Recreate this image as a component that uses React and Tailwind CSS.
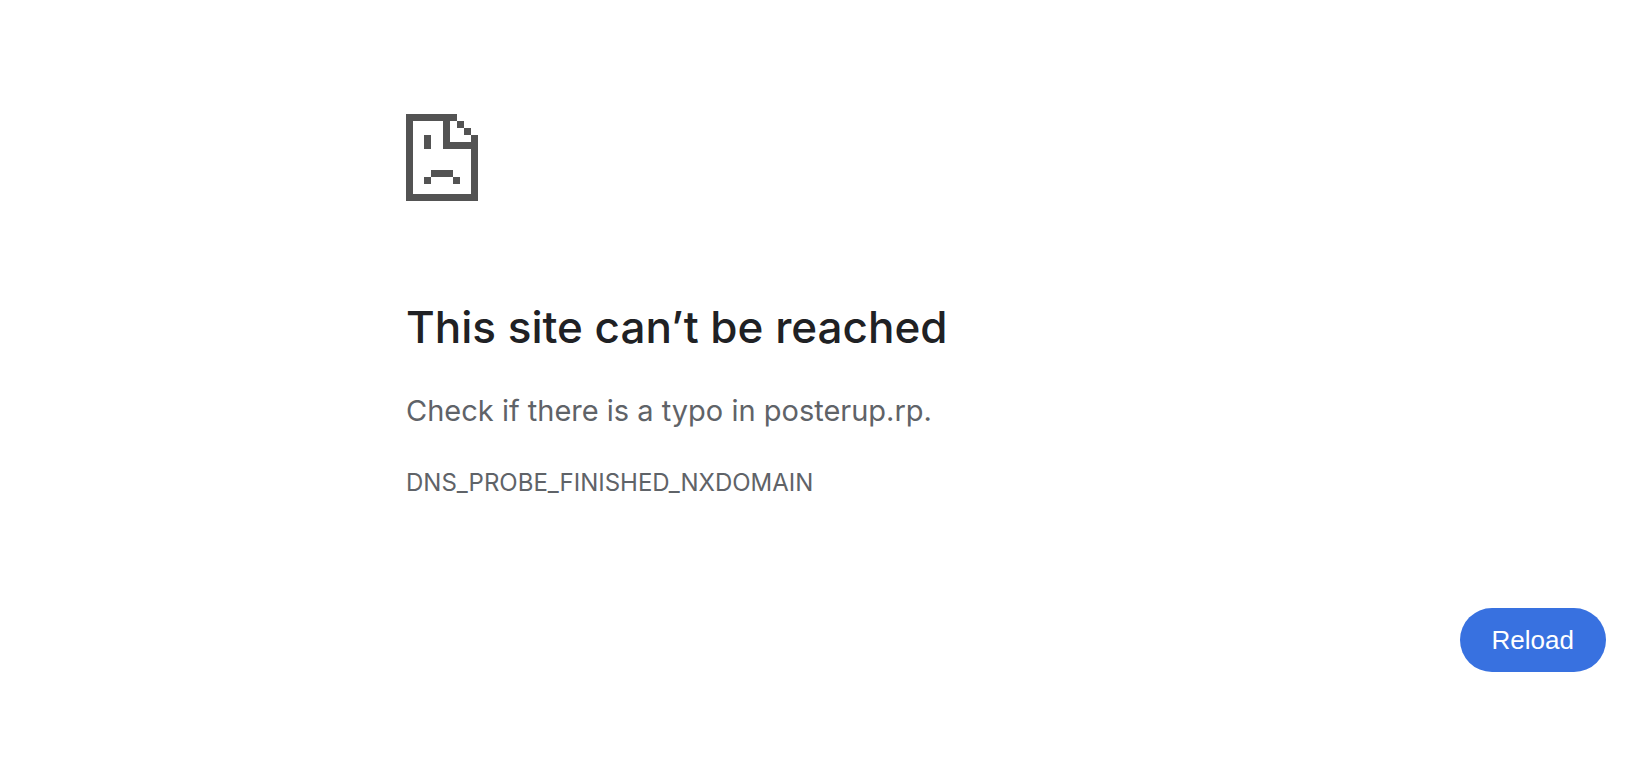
const HOST = 'posterup.rp';
const ERROR_CODE = 'DNS_PROBE_FINISHED_NXDOMAIN';

function SadPageIcon() {
  return (
    <svg
      width="72"
      height="87"
      viewBox="0 0 72 87"
      fill="#535353"
      shapeRendering="crispEdges"
      aria-hidden="true"
    >
      {/* Sheet outline */}
      <path d="M0 0h51v7H44v21h21v-7h7v66H0zM7 7v73h58V35H37V7z" fillRule="evenodd" />
      {/* Folded corner */}
      <path d="M51 7h7v7h-7zM58 14h7v7h-7z" />
      {/* Eye and mouth */}
      <path d="M18 21h7v14h-7zM25 56h22v7H25zM18 63h7v7h-7zM47 63h7v7h-7z" />
    </svg>
  );
}

export default function App() {
  return (
    <main className="min-h-screen bg-white pt-[114px] pl-[406px] pr-6 pb-8 font-['Inter','Liberation_Sans',sans-serif] text-[#5f6368]">
      <SadPageIcon />

      <h1 className="mt-[98px] text-[44px] leading-14 font-medium text-[#202124]">
        This site can’t be reached
      </h1>
      <p className="mt-8 text-[29px] leading-12">
        Check if there is a typo in {HOST}.
      </p>
      <p className="mt-8 text-2xl leading-8">{ERROR_CODE}</p>

      <div className="mt-[109px] flex justify-end">
        <button
          type="button"
          onClick={() => window.location.reload()}
          className="rounded-full bg-[#3871e0] px-8 py-4 font-['Liberation_Sans',Arial,sans-serif] text-[26px] leading-8 text-white"
        >
          Reload
        </button>
      </div>
    </main>
  );
}
